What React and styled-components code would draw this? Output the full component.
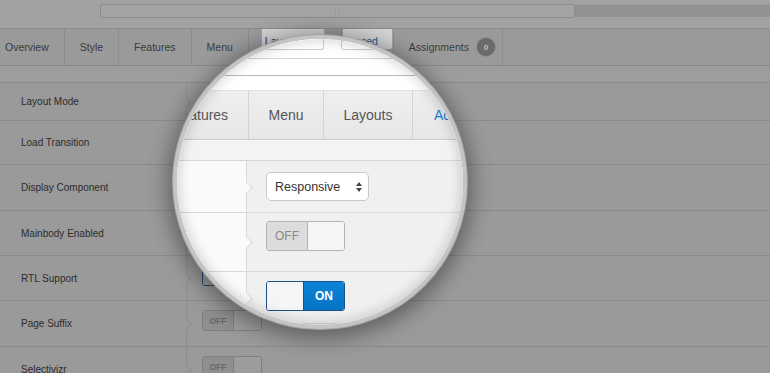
import React from 'react';
import styled, { createGlobalStyle } from 'styled-components';

const Global = createGlobalStyle`
  html, body { margin: 0; padding: 0; }
  body {
    width: 770px; height: 373px; overflow: hidden;
    background: #9a9a9a;
    font-family: "Liberation Sans", Arial, sans-serif;
  }
  * { box-sizing: border-box; }
`;

const Stage = styled.div`
  position: relative;
  width: 770px;
  height: 373px;
  overflow: hidden;
  display: flex;
  flex-direction: column;
  background: #9a9a9a;
`;

/* ---------- dimmed page ---------- */
const TopArea = styled.div`
  flex: none;
  height: 29px;
  background: #a2a2a2;
  border-bottom: 1px solid #8b8b8b;
  display: flex;
  align-items: flex-start;
  padding: 4px 0 0 100px;
`;
const Handle = styled.div`
  width: 475px;
  height: 14px;
  border: 1px solid #8c8c8c;
  border-radius: 2px;
  background: #a4a4a4;
  display: flex;
  align-items: center;
  justify-content: center;
`;
const Band = styled.div`
  flex: 1;
  height: 12px;
  margin-top: 1px;
  background: #929292;
  border-top: 1px solid #8a8a8a;
`;
const TabBar = styled.div`
  flex: none;
  height: 37px;
  display: flex;
  margin-left: -10px;
  background: #9a9a9a;
  border-bottom: 1px solid #888;
`;
const Tab = styled.div`
  display: flex;
  align-items: ${p => (p.$pill ? 'flex-start' : 'center')};
  gap: 8px;
  padding: ${p => p.$pad || '0 15px'};
  border-right: 1px solid #8d8d8d;
  font-size: 10.5px;
  color: #3b3b3b;
  white-space: nowrap;
`;
const Pill = styled.div`
  width: ${p => p.$w}px;
  height: 21px;
  display: flex;
  align-items: flex-end;
  justify-content: ${p => (p.$right ? 'flex-end' : 'flex-start')};
  padding: 0 ${p => (p.$right ? '14px' : '0')} 2px ${p => (p.$right ? '0' : '3px')};
  background: #d4d4d4;
  border: 1px solid #a3a3a3;
  border-top: none;
  border-radius: 0 0 3px 3px;
  overflow: hidden;
  color: ${p => p.$c};
  font-size: 10.5px;
  line-height: 11px;
`;
const Badge = styled.span`
  width: 18px;
  height: 18px;
  border-radius: 50%;
  background: #6a6a6a;
  box-shadow: 0 0 0 1px #8c8c8c;
  color: #c4c4c4;
  font-size: 8px;
  font-weight: bold;
  display: flex;
  align-items: center;
  justify-content: center;
`;
const Strip = styled.div`
  flex: none;
  height: 17px;
  background: #9d9d9d;
  border-bottom: 1px solid #8a8a8a;
`;
const Row = styled.div`
  flex: none;
  display: flex;
  height: ${p => p.$h}px;
  border-bottom: 1px solid #8a8a8a;
`;
const LabelCell = styled.div`
  position: relative;
  width: 187px;
  flex: none;
  display: flex;
  align-items: center;
  padding-left: 21px;
  font-size: 10px;
  color: #2c2c2c;
  border-right: 1px solid #8e8e8e;
  &::after {
    content: '';
    position: absolute;
    right: -4px;
    top: calc(50% - 3px);
    width: 6px;
    height: 6px;
    background: #9a9a9a;
    border-top: 1px solid #8e8e8e;
    border-right: 1px solid #8e8e8e;
    transform: rotate(45deg);
  }
`;
const ValueCell = styled.div`
  flex: 1;
  display: flex;
  align-items: flex-start;
  padding: 9px 0 0 15px;
`;
const DimSelect = styled.div`
  width: 76px;
  height: 21px;
  border: 1px solid #858585;
  border-radius: 3px;
  background: #a0a0a0;
`;
const DimToggle = styled.div`
  width: 60px;
  height: 21px;
  display: flex;
  border: 1px solid ${p => (p.$on ? '#274a73' : '#7f7f7f')};
  border-radius: 3px;
  overflow: hidden;
  flex-direction: ${p => (p.$on ? 'row-reverse' : 'row')};
`;
const DimPart = styled.div`
  width: 30px;
  display: flex;
  align-items: center;
  justify-content: center;
  font-size: 8.5px;
  font-weight: bold;
  background: ${p => (p.$on ? '#1d5b8c' : '#8f8f8f')};
  color: ${p => (p.$on ? '#b7c9d9' : '#676767')};
`;
const DimKnob = styled.div`
  flex: 1;
  background: #9c9c9c;
  border-left: ${p => (p.$on ? 'none' : '1px solid #808080')};
`;

/* ---------- magnifier ---------- */
const Lens = styled.div`
  position: absolute;
  left: 177px;
  top: 39px;
  width: 286px;
  height: 286px;
  border-radius: 50%;
  overflow: hidden;
  background: #f0f0f0;
  display: flex;
  flex-direction: column;
  box-shadow: 0 0 0 4px #c4c4c4, 0 0 0 5px #a3a3a3, 0 4px 20px 10px rgba(0, 0, 0, 0.36);
  font-family: "Liberation Sans", Arial, sans-serif;
  &::after {
    content: '';
    position: absolute;
    inset: 0;
    border-radius: 50%;
    box-shadow: inset 0 0 12px 2px rgba(0, 0, 0, 0.16);
    pointer-events: none;
  }
`;
const LensTop = styled.div`
  flex: none;
  height: 20px;
  background: #fff;
  border-bottom: 1px solid #d2d2d2;
  display: flex;
  align-items: flex-start;
  gap: 17px;
  padding-left: 83px;
`;
const GhostBox = styled.div`
  width: ${p => p.$w}px;
  height: 11px;
  background: #fff;
  border: 1px solid #cfcfcf;
  border-top: none;
  border-radius: 0 0 3px 3px;
`;
const LensStrip = styled.div`
  flex: none;
  height: 17px;
  background: #fff;
  border-bottom: 1px solid #b9b9b9;
`;
const LensTabArea = styled.div`
  flex: none;
  height: 64px;
  padding-top: 14px;
  background: #fff;
  border-bottom: 1px solid #cdcdcd;
  display: flex;
  margin-left: -24px;
`;
const LensTab = styled.div`
  width: ${p => p.$w}px;
  flex: none;
  display: flex;
  align-items: center;
  justify-content: ${p => (p.$left ? 'flex-start' : 'center')};
  padding-left: ${p => (p.$left ? '21px' : '0')};
  border-top: 1px solid #e2e2e2;
  border-right: 1px solid #d3d3d3;
  background: linear-gradient(#efefef, #e7e7e7);
  font-size: 14px;
  color: ${p => (p.$blue ? '#1a7fd0' : '#555')};
  white-space: nowrap;
`;
const LensSub = styled.div`
  flex: none;
  height: 21px;
  background: #f3f3f3;
  border-bottom: 1px solid #d6d6d6;
`;
const LensRow = styled.div`
  flex: none;
  display: flex;
  height: ${p => p.$h}px;
  border-bottom: 1px solid #d8d8d8;
`;
const LensLabel = styled.div`
  position: relative;
  width: 70px;
  flex: none;
  background: #fafafa;
  border-right: 1px solid #dadada;
  &::after {
    content: '';
    position: absolute;
    right: -5px;
    top: calc(50% - 4px);
    width: 8px;
    height: 8px;
    background: #fafafa;
    border-top: 1px solid #dadada;
    border-right: 1px solid #dadada;
    transform: rotate(45deg);
  }
`;
const LensValue = styled.div`
  flex: 1;
  background: #f0f0f0;
  display: flex;
  align-items: flex-start;
  padding: ${p => p.$pt}px 0 0 19px;
`;
const Select = styled.div`
  width: 103px;
  height: 29px;
  background: #fff;
  border: 1px solid #c9c9c9;
  border-radius: 5px;
  display: flex;
  align-items: center;
  justify-content: space-between;
  padding: 0 6px 0 8px;
  font-size: 12.5px;
  color: #333;
`;
const Toggle = styled.div`
  width: 79px;
  height: 30px;
  display: flex;
  border: 1px solid ${p => (p.$on ? '#1d4f87' : '#b3b3b3')};
  border-radius: 3px;
  overflow: hidden;
  flex-direction: ${p => (p.$on ? 'row-reverse' : 'row')};
`;
const TogglePart = styled.div`
  width: 40px;
  flex: none;
  display: flex;
  align-items: center;
  justify-content: center;
  font-size: 12px;
  font-weight: ${p => (p.$on ? 'bold' : 'normal')};
  background: ${p => (p.$on ? 'linear-gradient(#0d84d8, #0673c4)' : '#dcdcdc')};
  color: ${p => (p.$on ? '#fff' : '#8a8a8a')};
`;
const ToggleKnob = styled.div`
  flex: 1;
  background: #f5f5f5;
  border-left: ${p => (p.$on ? 'none' : '1px solid #b0b0b0')};
  border-right: ${p => (p.$on ? '1px solid #1d4f87' : 'none')};
`;

const Grip = () => (
  <svg width="5" height="7" viewBox="0 0 5 7">
    {[0, 3, 6].map(y => [0, 4].map(x => <rect key={`${x}-${y}`} x={x} y={y} width="1" height="1" fill="#888" />))}
  </svg>
);

const Arrows = () => (
  <svg width="6" height="10" viewBox="0 0 6 10">
    <polygon points="0,4 3,0 6,4" fill="#444" />
    <polygon points="0,6 3,10 6,6" fill="#444" />
  </svg>
);

const tabs = ['Overview', 'Style', 'Features', 'Menu'];
const rows = [
  { label: 'Layout Mode', h: 38, ctrl: 'select' },
  { label: 'Load Transition', h: 44, ctrl: 'select' },
  { label: 'Display Component', h: 46, ctrl: 'select' },
  { label: 'Mainbody Enabled', h: 45, ctrl: 'off' },
  { label: 'RTL Support', h: 45, ctrl: 'on' },
  { label: 'Page Suffix', h: 46, ctrl: 'off' },
  { label: 'Selectivizr', h: 45, ctrl: 'off' },
];

export default function App() {
  return (
    <>
      <Global />
      <Stage>
        <TopArea>
          <Handle><Grip /></Handle>
          <Band />
        </TopArea>
        <TabBar>
          {tabs.map(t => (
            <Tab key={t}>{t}</Tab>
          ))}
          <Tab $pill $pad="0 16px 0 12px">
            <Pill $w={64} $c="#3a3a3a">Layouts</Pill>
          </Tab>
          <Tab $pill $pad="0">
            <Pill $w={51} $c="#1c5f99" $right>Advanced</Pill>
          </Tab>
          <Tab $pad="0 7px 0 15px">
            Assignments
            <Badge>0</Badge>
          </Tab>
        </TabBar>
        <Strip />
        {rows.map(r => (
          <Row key={r.label} $h={r.h}>
            <LabelCell>{r.label}</LabelCell>
            <ValueCell>
              {r.ctrl === 'select' && <DimSelect />}
              {r.ctrl !== 'select' && (
                <DimToggle $on={r.ctrl === 'on'}>
                  <DimPart $on={r.ctrl === 'on'}>{r.ctrl === 'on' ? 'ON' : 'OFF'}</DimPart>
                  <DimKnob $on={r.ctrl === 'on'} />
                </DimToggle>
              )}
            </ValueCell>
          </Row>
        ))}

        <Lens>
          <LensTop>
            <GhostBox $w={64} />
            <GhostBox $w={51} />
          </LensTop>
          <LensStrip />
          <LensTabArea>
            <LensTab $w={96}>Features</LensTab>
            <LensTab $w={75}>Menu</LensTab>
            <LensTab $w={89}>Layouts</LensTab>
            <LensTab $w={102} $left $blue>Advanced</LensTab>
          </LensTabArea>
          <LensSub />
          <LensRow $h={52}>
            <LensLabel />
            <LensValue $pt={11}>
              <Select>
                <span>Responsive</span>
                <Arrows />
              </Select>
            </LensValue>
          </LensRow>
          <LensRow $h={59}>
            <LensLabel />
            <LensValue $pt={8}>
              <Toggle>
                <TogglePart>OFF</TogglePart>
                <ToggleKnob />
              </Toggle>
            </LensValue>
          </LensRow>
          <LensRow $h={52}>
            <LensLabel />
            <LensValue $pt={9}>
              <Toggle $on>
                <TogglePart $on>ON</TogglePart>
                <ToggleKnob $on />
              </Toggle>
            </LensValue>
          </LensRow>
        </Lens>
      </Stage>
    </>
  );
}
